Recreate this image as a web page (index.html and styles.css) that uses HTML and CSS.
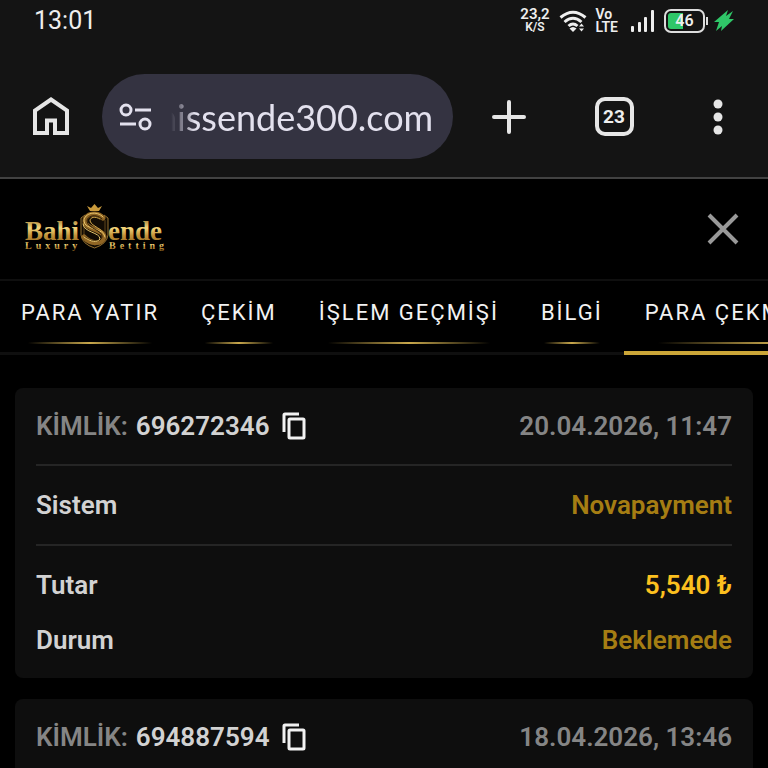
FILE: index.html
```html
<!DOCTYPE html>
<html lang="tr">
<head>
  <meta charset="UTF-8" />
  <meta name="viewport" content="width=device-width, initial-scale=1.0" />
  <title>BahisSende</title>
  <link rel="stylesheet" href="styles.css">
</head>
<body>
  <div class="browser">
    <div class="status-bar">
      <span class="clock">13:01</span>
      <div class="status-icons">
        <div class="speed"><span>23,2</span><span class="unit">K/S</span></div>
        <svg class="wifi" width="28" height="24" viewBox="0 0 28 24" fill="none" stroke="#eee" stroke-width="3">
          <path d="M1.5 8.5Q14-2 26.5 8.5" />
          <path d="M5.5 13Q14 5.500 22.500 13" />
          <path d="M9.500 17Q14 13 18.500 17" />
          <path d="M10.500 19.500Q14 16.500 17.500 19.500L14 23z" fill="#eee" stroke="none" />
          <path d="M20 17.500l2.500-3 2.500 3zM20 19.500l2.500 3 2.500-3z" fill="#eee" stroke="none" />
        </svg>
        <div class="volte"><span>Vo</span><span>LTE</span></div>
        <svg class="signal" width="24" height="22" viewBox="0 0 24 22" fill="#eee">
          <rect x="0" y="16" width="3" height="6" rx="1" />
          <rect x="7" y="12" width="3" height="10" rx="1" />
          <rect x="13" y="7" width="3" height="15" rx="1" />
          <rect x="20" y="0" width="3" height="22" rx="1" />
        </svg>
        <div class="battery"><span>46</span></div>
        <svg width="20" height="22" viewBox="0 0 20 22" fill="#2fc768">
          <path d="M14 0L0 12h5l-3 9 6-5-1 5L20 9h-5l4-8-7 5z" />
        </svg>
      </div>
    </div>

    <div class="toolbar">
      <button class="tool" aria-label="Ana sayfa">
        <svg width="36" height="39" viewBox="0 0 36 39" fill="none" stroke="#e6e6e6" stroke-width="4">
          <path d="M2 36V13.500L18 2.500 34 13.500V36H22V23.500H14V36z" />
        </svg>
      </button>
      <div class="address">
        <svg width="34" height="28" viewBox="0 0 34 28" fill="none" stroke="#e3e1ee" stroke-width="3">
          <circle cx="7" cy="7" r="5" />
          <circle cx="26" cy="21" r="5" />
          <path d="M16 7h16M1 21h16" />
        </svg>
        <input class="url" type="text" value="hissende300.com" aria-label="Adres">
      </div>
      <button class="tool" aria-label="Yeni sekme">
        <svg width="34" height="34" viewBox="0 0 34 34" stroke="#e6e6e6" stroke-width="4" stroke-linecap="round">
          <path d="M17 2v30M2 17h30" />
        </svg>
      </button>
      <button class="tool" aria-label="Sekmeler"><span class="tab-count">23</span></button>
      <button class="tool" aria-label="Menü">
        <svg width="10" height="36" viewBox="0 0 10 36" fill="#e6e6e6">
          <circle cx="5" cy="5" r="4.500" />
          <circle cx="5" cy="18" r="4.500" />
          <circle cx="5" cy="31" r="4.500" />
        </svg>
      </button>
    </div>
  </div>

  <header class="site-header">
    <a class="logo" href="#" aria-label="BahisSende">
      <svg width="142" height="52" viewBox="0 0 142 52">
        <defs>
          <linearGradient id="gold" x1="0" y1="0" x2="0" y2="1">
            <stop offset="0" stop-color="#8a5f1c" />
            <stop offset=".4" stop-color="#f3d67c" />
            <stop offset=".65" stop-color="#c2923a" />
            <stop offset="1" stop-color="#8b601d" />
          </linearGradient>
        </defs>
        <g fill="url(#gold)" font-family="Liberation Serif, serif" font-weight="bold">
          <text x="1" y="37" font-size="27">Bahi</text>
          <text x="84" y="37" font-size="27">ende</text>
          <g font-size="10" letter-spacing="4">
            <text x="1" y="46">Luxury</text>
            <text x="85" y="46">Betting</text>
          </g>
        </g>
        <path d="M66 8l-3-5 4 2 3.500-4 3.500 4 4-2-3 5z" fill="#c99a3c" />
        <path d="M61 12l-4 3v17q1 9 13.500 13Q83 41 84 32V15l-4-3" fill="#120c04" stroke="#94702f" stroke-width="1" />
        <path d="M60 17v15q1 7 10.500 10Q80 39 81 32V17" fill="none" stroke="#5f451b" stroke-width="1" />
        <g fill="none" stroke-linecap="round">
          <path d="M79 15C73 8 61 11 61 18 61 27 80 26 80 34 79 41 67 42 60 34" stroke="#8f6524" stroke-width="5" />
          <path d="M79 14C73 7 60 10 60 18 60 27 81 25 81 34" stroke="#e8c76e" stroke-width="1" />
          <path d="M78 16C72 10 63 13 63 18 64 26 79 27 78 34 77 39 68 40 61 34" stroke="#2b1b05" stroke-width="1" />
          <path d="M59 21C60 30 76 29 76 36 73 40 67 39 60 34" stroke="#e8c76e" stroke-width="1" />
          <path d="M76 16C71 13 66 14 66 18 68 24 79 25 80 32" stroke="#d6aa4c" stroke-width="1" />
        </g>
      </svg>
    </a>
    <button class="close" aria-label="Kapat">
      <svg width="32" height="32" viewBox="0 0 32 32" stroke="#999" stroke-width="4">
        <path d="M2 2l28 28M30 2L2 30" />
      </svg>
    </button>
  </header>

  <nav class="tabs">
    <a href="#"><span>PARA YATIR</span></a>
    <a href="#"><span>ÇEKİM</span></a>
    <a href="#"><span>İŞLEM GEÇMİŞİ</span></a>
    <a href="#"><span>BİLGİ</span></a>
    <a href="#" class="active"><span>PARA ÇEKME DURUMU</span></a>
  </nav>

  <main class="history">
    <section class="card">
      <div class="row card-head">
        <span class="label">KİMLİK:</span>
        <span class="number">696272346</span>
        <button class="copy" aria-label="Kopyala">
          <svg width="24" height="28" viewBox="0 0 24 28" fill="none" stroke="#f2f2f2" stroke-width="3">
            <path d="M2 20V3q0-1 1-1h14" />
            <rect x="7" y="7" width="15" height="19" rx="1" />
          </svg>
        </button>
        <time>20.04.2026, 11:47</time>
      </div>
      <dl>
        <div class="row system"><dt>Sistem</dt><dd>Novapayment</dd></div>
        <div class="row"><dt>Tutar</dt><dd class="amount">5,540 ₺</dd></div>
        <div class="row"><dt>Durum</dt><dd>Beklemede</dd></div>
      </dl>
    </section>

    <section class="card">
      <div class="row card-head">
        <span class="label">KİMLİK:</span>
        <span class="number">694887594</span>
        <button class="copy" aria-label="Kopyala">
          <svg width="24" height="28" viewBox="0 0 24 28" fill="none" stroke="#f2f2f2" stroke-width="3">
            <path d="M2 20V3q0-1 1-1h14" />
            <rect x="7" y="7" width="15" height="19" rx="1" />
          </svg>
        </button>
        <time>18.04.2026, 13:46</time>
      </div>
    </section>
  </main>
</body>
</html>
```
FILE: styles.css
```css
* {
  box-sizing: border-box;
}
body {
  margin: 0;
  height: 100vh;
  display: flex;
  flex-direction: column;
  overflow: hidden;
  background: #000;
  color: #d2d2d2;
  font-family: Roboto, "Liberation Sans", sans-serif;
}
svg {
  display: block;
}
button {
  display: flex;
  align-items: center;
  justify-content: center;
  padding: 0;
  border: none;
  background: none;
  color: inherit;
  font: inherit;
  cursor: pointer;
}
a {
  color: inherit;
  text-decoration: none;
}

/* phone and browser bars */
.browser {
  flex-shrink: 0;
  background: #141414;
  border-bottom: 2px solid #424242;
  color: #eee;
}
.status-bar {
  display: flex;
  justify-content: space-between;
  align-items: center;
  height: 58px;
  padding: 0 34px 17px;
}
.clock {
  font-size: 25px;
}
.status-icons {
  display: flex;
  align-items: center;
  gap: 9px;
}
.speed,
.volte {
  display: flex;
  flex-direction: column;
  font-size: 14px;
  font-weight: 600;
  line-height: 13px;
}
.speed {
  align-items: center;
  font-size: 15px;
}
.unit {
  font-size: 12px;
}
.signal {
  margin-left: 4px;
}
.battery {
  position: relative;
  width: 41px;
  height: 24px;
  padding: 2px;
  border: 2px solid #ddd;
  border-radius: 7px;
  background: linear-gradient(90deg, #2fc768 46%, transparent 46%) content-box;
  font-size: 16px;
  font-weight: 600;
  line-height: 16px;
  text-align: center;
}
.battery::after {
  content: "";
  position: absolute;
  top: 6px;
  right: -5px;
  width: 2px;
  height: 8px;
  background: #ddd;
}
.toolbar {
  display: grid;
  grid-template-columns: 102px 1fr 104px 106px 101px;
  align-items: center;
  height: 119px;
  padding-bottom: 2px;
}
.tool {
  height: 85px;
}
.address {
  display: flex;
  align-items: center;
  gap: 4px;
  height: 85px;
  min-width: 0;
  margin-right: 4px;
  padding: 0 12px 0 17px;
  border-radius: 43px;
  background: #343341;
}
.address svg {
  flex-shrink: 0;
}
.url {
  flex: 1;
  min-width: 0;
  padding: 0;
  border: none;
  outline: none;
  background: none;
  color: #e3e1ee;
  font-family: Lato, sans-serif;
  font-size: 36px;
  -webkit-mask-image: linear-gradient(90deg, transparent 14px, #000 38px);
  mask-image: linear-gradient(90deg, transparent 14px, #000 38px);
}
.tab-count {
  width: 39px;
  height: 39px;
  border: 4px solid #e6e6e6;
  border-radius: 10px;
  font-size: 19px;
  font-weight: 700;
  line-height: 32px;
}

/* site header */
.site-header {
  display: flex;
  flex-shrink: 0;
  justify-content: space-between;
  align-items: center;
  height: 100px;
  padding: 0 29px 0 24px;
}

/* tabs */
.tabs {
  display: flex;
  height: 76px;
  flex-shrink: 0;
  overflow: hidden;
  border-top: 2px solid #0f0f0f;
  box-shadow: inset 0 -3px #0f0f0f;
  color: #f2f2f2;
  font-size: 22px;
  letter-spacing: 2px;
  white-space: nowrap;
}
.tabs a {
  padding: 0 21px;
}
.tabs span {
  display: block;
  height: 63px;
  line-height: 64px;
  background: linear-gradient(90deg, transparent 5%, #c9a84c 50%, transparent 95%) bottom / 100% 2px no-repeat;
}
.tabs .active {
  border-bottom: 4px solid #cba638;
}

/* transactions */
.history {
  display: flex;
  flex: 1;
  flex-direction: column;
  gap: 21px;
  min-height: 0;
  overflow: hidden;
  padding: 33px 15px 0;
}
.card {
  flex-shrink: 0;
  padding: 0 21px;
  border-radius: 8px;
  background: #0e0e0e;
  font-size: 26px;
  font-weight: 600;
}
.row {
  display: flex;
  align-items: center;
  height: 55px;
}
.card-head {
  height: 78px;
  border-bottom: 2px solid #252525;
}
.label,
time {
  color: #858585;
}
.number {
  margin: 0 12px 0 8px;
}
time {
  margin-left: auto;
}
dl {
  margin: 0;
  padding-bottom: 11px;
}
dd {
  margin: 0 0 0 auto;
  color: #a57d13;
}
.system {
  height: 80px;
  margin-bottom: 11px;
  border-bottom: 2px solid #252525;
}
.amount {
  color: #fcc01f;
}
```
